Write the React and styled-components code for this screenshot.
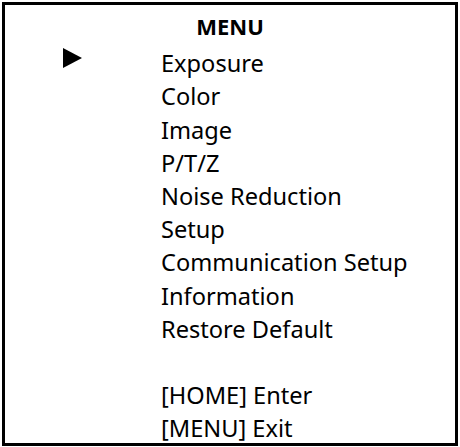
import React from 'react';
import styled, { createGlobalStyle } from 'styled-components';

const GlobalStyle = createGlobalStyle`
  html, body {
    margin: 0;
    padding: 0;
    background: #fff;
  }
  body {
    font-family: 'Noto Sans', 'Open Sans', sans-serif;
    color: #000;
    font-variant-ligatures: none;
  }
`;

const Frame = styled.div`
  box-sizing: border-box;
  width: 456px;
  height: 444px;
  margin: 2px 0 0 2px;
  border: 3px solid #000;
  padding-top: 5.5px;
`;

const Title = styled.h1`
  margin: 0;
  font-size: 22px;
  font-weight: 700;
  line-height: 30px;
  text-align: center;
`;

const List = styled.div`
  display: grid;
  grid-template-columns: 156px 1fr;
  margin-top: 6.8px;
`;

const Pointer = styled.div`
  display: flex;
  align-items: flex-start;
  padding: 0.7px 0 0 58px;
  visibility: ${(p) => (p.$active ? 'visible' : 'hidden')};
`;

const Label = styled.div`
  font-size: 23.6px;
  line-height: 33.2px;
  height: 33.2px;
  white-space: nowrap;
`;

const items = [
  'Exposure',
  'Color',
  'Image',
  'P/T/Z',
  'Noise Reduction',
  'Setup',
  'Communication Setup',
  'Information',
  'Restore Default',
  '',
  '[HOME] Enter',
  '[MENU] Exit',
];

const Arrow = () => (
  <svg width="19" height="20" viewBox="0 0 19 20">
    <path d="M0 0 L19 10 L0 20 Z" fill="#000" />
  </svg>
);

export default function App() {
  return (
    <>
      <GlobalStyle />
      <Frame>
        <Title>MENU</Title>
        <List>
          {items.map((item, i) => (
            <React.Fragment key={i}>
              <Pointer $active={i === 0}>
                <Arrow />
              </Pointer>
              <Label>{item || '\u00a0'}</Label>
            </React.Fragment>
          ))}
        </List>
      </Frame>
    </>
  );
}
